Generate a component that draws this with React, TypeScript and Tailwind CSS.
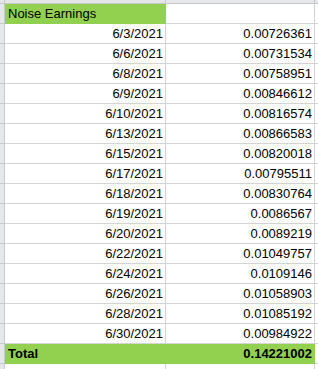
import React from "react";

type Row = { date: string; value: string };

const rows: Row[] = [
  { date: "6/3/2021", value: "0.00726361" },
  { date: "6/6/2021", value: "0.00731534" },
  { date: "6/8/2021", value: "0.00758951" },
  { date: "6/9/2021", value: "0.00846612" },
  { date: "6/10/2021", value: "0.00816574" },
  { date: "6/13/2021", value: "0.00866583" },
  { date: "6/15/2021", value: "0.00820018" },
  { date: "6/17/2021", value: "0.00795511" },
  { date: "6/18/2021", value: "0.00830764" },
  { date: "6/19/2021", value: "0.0086567" },
  { date: "6/20/2021", value: "0.0089219" },
  { date: "6/22/2021", value: "0.01049757" },
  { date: "6/24/2021", value: "0.0109146" },
  { date: "6/26/2021", value: "0.01058903" },
  { date: "6/28/2021", value: "0.01085192" },
  { date: "6/30/2021", value: "0.00984922" },
];

function Strip() {
  return <div className="h-full w-[5px] shrink-0 border-r border-b border-[#c6c9cd] bg-[#e6e7e9]" />;
}

export default function App() {
  return (
    <div className="h-[369px] w-[318px] overflow-hidden bg-white text-[13px] text-black [font-family:'Liberation_Sans',Arial,sans-serif]">
      {/* column header strip */}
      <div className="flex h-[4px] bg-[#e6e7e9]">
        <div className="w-[5px] shrink-0 border-r border-b border-[#c6c9cd]" />
        <div className="w-[161px] shrink-0 border-r border-b border-[#c6c9cd]" />
        <div className="w-[149px] shrink-0 border-r border-b border-[#c6c9cd]" />
        <div className="flex-1 border-b border-[#c6c9cd]" />
      </div>

      {/* header row */}
      <div className="flex h-[20px] leading-[20px]">
        <Strip />
        <div className="w-[161px] shrink-0 border-r border-b border-[#92d050] bg-[#92d050] pl-[3px]">
          Noise Earnings
        </div>
        <div className="w-[149px] shrink-0 border-r border-b border-[#d4d4d4]" />
        <div className="flex-1 border-b border-[#d4d4d4]" />
      </div>

      {rows.map((r) => (
        <div key={r.date} className="flex h-[20px] leading-[20px]">
          <Strip />
          <div className="w-[161px] shrink-0 border-r border-b border-[#d4d4d4] pr-[2px] text-right">
            {r.date}
          </div>
          <div className="w-[149px] shrink-0 border-r border-b border-[#d4d4d4] pr-[2px] text-right">
            {r.value}
          </div>
          <div className="flex-1 border-b border-[#d4d4d4]" />
        </div>
      ))}

      {/* total row */}
      <div className="flex h-[20px] font-bold leading-[20px]">
        <Strip />
        <div className="w-[161px] shrink-0 border-r border-b border-[#92d050] bg-[#92d050] pl-[3px]">
          Total
        </div>
        <div className="w-[149px] shrink-0 border-r border-b border-[#92d050] bg-[#92d050] pr-[2px] text-right">
          0.14221002
        </div>
        <div className="flex-1 border-b border-[#d4d4d4]" />
      </div>

      <div className="flex h-[20px]">
        <Strip />
        <div className="w-[161px] shrink-0 border-r border-[#d4d4d4]" />
        <div className="w-[149px] shrink-0 border-r border-[#d4d4d4]" />
        <div className="flex-1" />
      </div>
    </div>
  );
}
